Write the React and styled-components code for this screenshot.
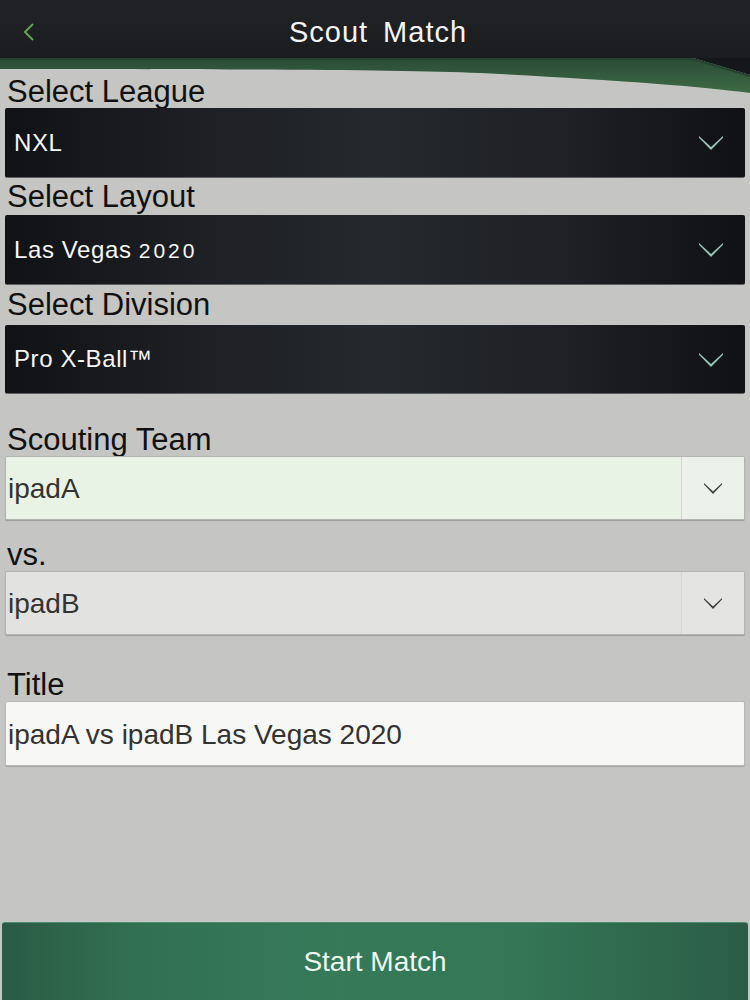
import React from "react";
import styled, { createGlobalStyle } from "styled-components";

const GlobalStyle = createGlobalStyle`
  html, body {
    margin: 0;
    padding: 0;
    background: #c5c5c3;
  }
  body {
    font-family: "Liberation Sans", Arial, sans-serif;
  }
`;

const Page = styled.div`
  width: 750px;
  min-height: 1000px;
  display: flex;
  flex-direction: column;
  background: #c5c5c3;
  overflow: hidden;
`;

const Header = styled.header`
  height: 58px;
  display: grid;
  grid-template-columns: 80px 1fr 80px;
  align-items: center;
  background: linear-gradient(180deg, #212327 0%, #1a1c1f 100%);
`;

const BackButton = styled.button`
  background: none;
  border: none;
  padding: 6px 0 0 22px;
  height: 58px;
  display: flex;
  align-items: center;
  cursor: pointer;
`;

const Title = styled.h1`
  margin: 0;
  padding: 6px 0 0 6px;
  text-align: center;
  color: #f4f4f4;
  font-weight: normal;
  font-size: 29px;
  letter-spacing: 1px;
  word-spacing: 6px;
`;

const Wave = styled.svg`
  display: block;
  width: 750px;
  height: 44px;
  margin-bottom: -26px;
`;

const Form = styled.main`
  display: flex;
  flex-direction: column;
`;

const Label = styled.div`
  margin: ${(p) => p.$top || 0}px 0 0 7px;
  height: ${(p) => p.$h || 32}px;
  line-height: ${(p) => p.$h || 32}px;
  font-size: 31px;
  color: #111;
`;

const DarkSelect = styled.div`
  height: ${(p) => p.$h || 70}px;
  box-sizing: border-box;
  margin: 0 5px;
  padding: 0 22px 0 9px;
  display: flex;
  align-items: center;
  justify-content: space-between;
  border-radius: 2px;
  border-bottom: 1px solid #5d6062;
  background: linear-gradient(
    90deg,
    #111215 0%,
    #1d1f24 25%,
    #25282d 50%,
    #1f2126 75%,
    #101114 100%
  );
  color: #f6f6f6;
  font-size: 24px;
  letter-spacing: 0.6px;
`;

const OldNums = styled.span`
  font-size: 21px;
  letter-spacing: 3px;
`;

const LightSelect = styled.div`
  height: 64px;
  box-sizing: border-box;
  margin: 0 5px;
  display: flex;
  border: 1px solid #b3b3b1;
  border-radius: 2px;
  box-shadow: 0 1px 1px rgba(0, 0, 0, 0.2);
  background: ${(p) => (p.$active ? "#e8f3e6" : "#e2e2e0")};
`;

const Value = styled.div`
  flex: 1;
  display: flex;
  align-items: center;
  padding: 2px 0 0 2px;
  font-size: 28px;
  color: #333;
`;

const Caret = styled.div`
  width: 62px;
  display: flex;
  align-items: center;
  justify-content: center;
  border-left: 1px solid #d3d6d1;
  background: ${(p) => (p.$active ? "#ecf1ea" : "#e4e4e2")};
`;

const TextInput = styled.input`
  height: 65px;
  box-sizing: border-box;
  margin: 0 5px;
  padding: 3px 2px 0;
  border: 1px solid #b8b8b6;
  border-radius: 2px;
  box-shadow: 0 1px 1px rgba(0, 0, 0, 0.15);
  background: #f7f7f5;
  font-family: "Liberation Sans", Arial, sans-serif;
  font-size: 28px;
  color: #333;
  outline: none;
`;

const StartButton = styled.button`
  margin: auto 2px 0;
  height: 78px;
  border: none;
  border-top: 1px solid #4f8d6d;
  border-radius: 3px 3px 0 0;
  background: linear-gradient(
    90deg,
    #2a5b44 0%,
    #327053 18%,
    #367a5a 45%,
    #347656 70%,
    #2b5d46 100%
  );
  color: #eef7f0;
  font-family: "Liberation Sans", Arial, sans-serif;
  font-size: 28px;
  cursor: pointer;
`;

const DarkChevron = () => (
  <svg width="24" height="15" viewBox="0 0 24 15">
    <path d="M0 1 L12 12 L24 1 L24 2.8 L12 15 L0 2.8 Z" fill="#9ac6b6" />
  </svg>
);

const LightChevron = () => (
  <svg width="18" height="12" viewBox="0 0 18 12">
    <path d="M0 1 L9 9.5 L18 1 L18 2.6 L9 12 L0 2.6 Z" fill="#3a3a3a" />
  </svg>
);

const BackIcon = () => (
  <svg width="14" height="20" viewBox="0 0 14 20">
    <polyline
      points="11,2 3,10 11,18"
      fill="none"
      stroke="#5fa651"
      strokeWidth="2"
    />
  </svg>
);

const HeaderWave = () => (
  <Wave viewBox="0 0 750 44">
    <defs>
      <linearGradient id="band" x1="0" y1="0" x2="0" y2="1">
        <stop offset="0" stopColor="#2b4b38" />
        <stop offset="0.45" stopColor="#33593e" />
        <stop offset="1" stopColor="#3d6b43" />
      </linearGradient>
    </defs>
    <path d="M693 0 H750 V17 Z" fill="#16171a" />
    <path
      d="M0 0 H693 L750 17 V35 C700 28 600 21 480 15 C400 12 250 11 0 11 Z"
      fill="url(#band)"
    />
    <path d="M0 0 H693 L750 17 V19 L693 2 H0 Z" fill="#24412f" />
  </Wave>
);

const DarkField = ({ label, top, h, boxH, children }) => (
  <>
    <Label $top={top} $h={h}>
      {label}
    </Label>
    <DarkSelect $h={boxH}>
      <span>{children}</span>
      <DarkChevron />
    </DarkSelect>
  </>
);

const TeamField = ({ label, top, value, active }) => (
  <>
    <Label $top={top}>{label}</Label>
    <LightSelect $active={active}>
      <Value>{value}</Value>
      <Caret $active={active}>
        <LightChevron />
      </Caret>
    </LightSelect>
  </>
);

export default function App() {
  return (
    <Page>
      <GlobalStyle />
      <Header>
        <BackButton aria-label="Back">
          <BackIcon />
        </BackButton>
        <Title>Scout Match</Title>
        <div />
      </Header>
      <HeaderWave />
      <Form>
        <DarkField label="Select League">NXL</DarkField>
        <DarkField label="Select Layout" h={37}>
          Las Vegas <OldNums>2020</OldNums>
        </DarkField>
        <DarkField label="Select Division" h={40} boxH={69}>
          Pro X-Ball™
        </DarkField>
        <TeamField label="Scouting Team" top={30} value="ipadA" active />
        <TeamField label="vs." top={19} value="ipadB" />
        <Label $top={34}>Title</Label>
        <TextInput readOnly value="ipadA vs ipadB Las Vegas 2020" />
      </Form>
      <StartButton>Start Match</StartButton>
    </Page>
  );
}
